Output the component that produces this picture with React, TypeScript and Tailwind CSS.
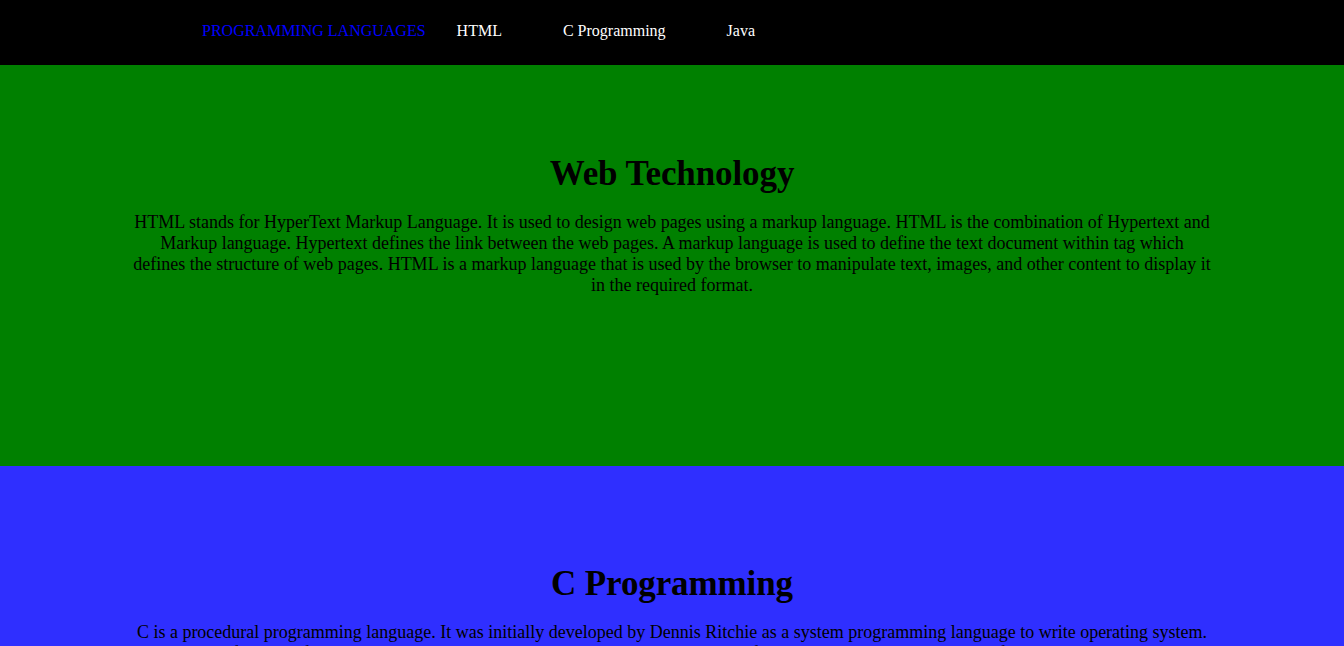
import React from "react";

const sections = [
  {
    title: "Web Technology",
    text: "HTML stands for HyperText Markup Language. It is used to design web pages using a markup language. HTML is the combination of Hypertext and Markup language. Hypertext defines the link between the web pages. A markup language is used to define the text document within tag which defines the structure of web pages. HTML is a markup language that is used by the browser to manipulate text, images, and other content to display it in the required format.",
    bg: "bg-[#008000]",
    pad: "pt-[89px]",
  },
  {
    title: "C Programming",
    text: "C is a procedural programming language. It was initially developed by Dennis Ritchie as a system programming language to write operating system. The main features of C language include low-level access to memory, simple set of keywords, and clean style, these features make C language suitable for system programming like operating system or compiler development.",
    bg: "bg-[#2f2fff]",
    pad: "pt-[98px]",
  },
];

function App() {
  return (
    <div className="font-['Liberation_Serif',serif] text-black">
      <nav className="h-[65px] bg-black flex items-center pl-[202px] text-[16px] pb-[4px]">
        <span className="text-[#0000ff]">PROGRAMMING LANGUAGES</span>
        <a className="text-white ml-[31px]">HTML</a>
        <a className="text-white ml-[61px]">C Programming</a>
        <a className="text-white ml-[61px]">Java</a>
      </nav>
      {sections.map((s) => (
        <section key={s.title} className={`${s.bg} ${s.pad} h-[401px] px-[133px] text-center`}>
          <h1 className="text-[35px] font-bold leading-[40px] tracking-[-0.1px]">{s.title}</h1>
          <p className="text-[18px] leading-[21px] mt-[18px]">{s.text}</p>
        </section>
      ))}
    </div>
  );
}

export default App;
